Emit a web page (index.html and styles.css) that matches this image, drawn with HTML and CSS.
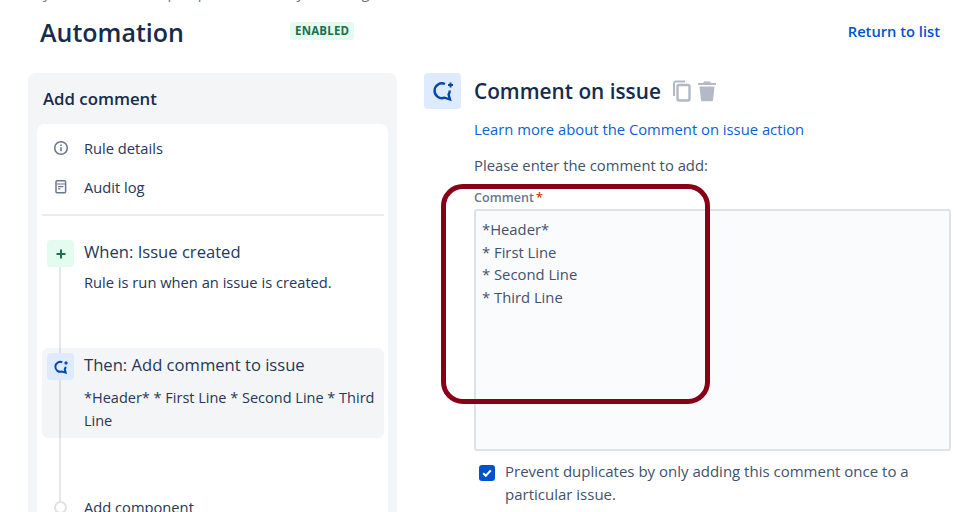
FILE: index.html
```html
<!DOCTYPE html>
<html lang="en">
<head>
    <meta charset="UTF-8">
    <title>Automation</title>
    <link rel="stylesheet" href="styles.css">
</head>
<body>
    <div class="page">
        <p class="cut-line">your rules for all open pull item to any other log</p>

        <div class="page-header">
            <h1>Automation</h1>
            <span class="lozenge">ENABLED</span>
            <a class="return-link" href="#">Return to list</a>
        </div>

        <div class="columns">
            <!-- Rule outline -->
            <div class="side-panel">
                <h2>Add comment</h2>
                <div class="side-card">
                    <div class="nav-item">
                        <svg class="nav-icon" width="16" height="16" viewBox="0 0 16 16" fill="none" stroke="#6b778c" stroke-width="1.6">
                            <circle cx="8" cy="8" r="6.3"/>
                            <path d="M8 7.2v4M8 4.4v1.6"/>
                        </svg>
                        <span>Rule details</span>
                    </div>
                    <div class="nav-item">
                        <svg class="nav-icon" width="16" height="16" viewBox="0 0 16 16" fill="none" stroke="#6b778c" stroke-width="1.5">
                            <rect x="3" y="1.7" width="9.6" height="12" rx="1"/>
                            <path d="M3.5 5h8.6M5 7.6h5.4M5 9.8h2.4" stroke-width="1.2"/>
                        </svg>
                        <span>Audit log</span>
                    </div>
                    <div class="divider"></div>

                    <div class="steps">
                        <div class="step step-trigger">
                            <div class="step-icon icon-green">
                                <svg width="12" height="12" viewBox="0 0 12 12" stroke="#216e4e" stroke-width="2"><path d="M6 1.5v9M1.5 6h9"/></svg>
                            </div>
                            <div class="step-body">
                                <div class="step-title">When: Issue created</div>
                                <div class="step-text">Rule is run when an issue is created.</div>
                            </div>
                        </div>
                        <div class="step step-action">
                            <div class="step-icon icon-blue">
                                <svg width="16" height="16" viewBox="0 0 24 24" fill="none" stroke="#0747a6" stroke-width="3">
                                    <path d="M14 5A7.400 7.400 0 1 0 13.500 18.700L19 20.400 17.600 15.500A7.400 7.400 0 0 0 18.800 11.500"/>
                                    <path d="M19.500 3.500v5M17 6h5" stroke-width="2.200"/>
                                </svg>
                            </div>
                            <div class="step-body">
                                <div class="step-title">Then: Add comment to issue</div>
                                <div class="step-text">*Header* * First Line * Second Line * Third Line</div>
                            </div>
                        </div>
                        <div class="step step-add">
                            <div class="step-dot"></div>
                            <div class="step-body">Add component</div>
                        </div>
                    </div>
                </div>
            </div>

            <!-- Component config -->
            <div class="config">
                <div class="config-head">
                    <div class="config-icon">
                        <svg width="24" height="24" viewBox="0 0 24 24" fill="none" stroke="#0747a6" stroke-width="2.400">
                            <path d="M14 5A7.400 7.400 0 1 0 13.500 18.700L19 20.400 17.600 15.500A7.400 7.400 0 0 0 18.800 11.500"/>
                            <path d="M19.500 3.500v5M17 6h5" stroke-width="2"/>
                        </svg>
                    </div>
                    <h2>Comment on issue</h2>
                    <svg class="copy-icon" width="22" height="24" viewBox="0 0 22 24" fill="none" stroke="#b3b9c4" stroke-width="2">
                        <path d="M14 2.500H5a2 2 0 0 0-2 2V17" />
                        <rect x="6.500" y="6" width="12" height="15.500" rx="1.500" stroke-width="2.400"/>
                    </svg>
                    <svg width="20" height="22" viewBox="0 0 20 22" fill="#b3bac5">
                        <path d="M7 1.500h6l.8 1.500H19v2H1V3h5.200zM2.500 6.500h15l-1.500 14a1 1 0 0 1-1 .8H5a1 1 0 0 1-1-.8z"/>
                    </svg>
                </div>

                <div class="config-body">
                    <a class="learn-link" href="#">Learn more about the Comment on issue action</a>
                    <p class="prompt">Please enter the comment to add:</p>
                    <label class="field-label">Comment<span class="required">*</span></label>
                    <div class="comment-box">*Header*<br>* First Line<br>* Second Line<br>* Third Line</div>
                    <div class="check-row">
                        <span class="checkbox">
                            <svg width="12" height="12" viewBox="0 0 12 12" fill="none" stroke="#fff" stroke-width="2"><path d="M2.200 6.300l2.600 2.500 5-5.400"/></svg>
                        </span>
                        <span>Prevent duplicates by only adding this comment once to a particular issue.</span>
                    </div>
                </div>
            </div>
        </div>

        <!-- Hand-drawn highlight on top of the screenshot -->
        <div class="highlight"></div>
    </div>
</body>
</html>
```

FILE: styles.css
```css
* {
    box-sizing: border-box;
    margin: 0;
    padding: 0;
}

html, body {
    height: 100%;
    overflow: hidden;
}

body {
    font-family: "Open Sans", "Noto Sans", sans-serif;
    font-size: 14.7px;
    line-height: 23px;
    color: #253858;
    background: #fff;
}

a {
    color: #0c5fd8;
    text-decoration: none;
}

.page {
    position: relative;
    height: 512px;
    overflow: hidden;
    padding-left: 28px;
}

/* Previous line of the page, only the descenders are still in view */
.cut-line {
    height: 21px;
    margin-top: -18px;
    padding-left: 15px;
    line-height: 20px;
    color: #6b778c;
    white-space: nowrap;
    overflow: hidden;
}

.page-header {
    display: flex;
    align-items: center;
    height: 59px;
    padding-left: 12px;
    padding-right: 17px;
}

.page-header h1 {
    width: 250px;
    font-size: 25px;
    font-weight: 600;
    color: #172b4d;
}

.lozenge {
    padding: 0 5px;
    height: 18px;
    line-height: 18px;
    font-size: 11.500px;
    font-weight: 700;
    letter-spacing: 0.2px;
    color: #216e4e;
    background: #e3fcef;
    border-radius: 3px;
    margin-top: -3px;
}

.return-link {
    margin-left: auto;
    font-size: 14.700px;
    font-weight: 600;
    color: #0052cc;
    margin-top: -3px;
}

.columns {
    display: flex;
    margin-top: 11px;
}

/* Left outline */
.side-panel {
    flex: none;
    width: 369px;
    height: 460px;
    padding: 0 9px;
    background: #f4f5f7;
    border-radius: 8px;
}

.side-panel h2 {
    padding: 14px 0 0 6px;
    height: 51px;
    font-size: 16.800px;
    font-weight: 600;
    color: #172b4d;
}

.side-card {
    height: 420px;
    padding: 5px 4px 0 5px;
    background: #fff;
    border-radius: 8px;
}

.nav-item {
    display: flex;
    align-items: center;
    height: 39px;
    gap: 15px;
    padding-left: 11px;
}

.nav-icon {
    flex: none;
    margin-top: -2px;
}

.divider {
    height: 2px;
    margin-top: 7px;
    background: #ebecf0;
}

.steps {
    position: relative;
    padding-top: 19px;
}

.steps::before {
    content: '';
    position: absolute;
    left: 17px;
    top: 50px;
    width: 2px;
    height: 240px;
    background: #e6e7ec;
}

.step {
    position: relative;
    display: flex;
    gap: 10px;
    padding: 5px;
    border-radius: 6px;
}

.step-trigger {
    height: 113px;
}

.step-action {
    height: 90px;
    background: rgba(9, 30, 66, 0.045);
}

.step-action .step-title {
    margin-bottom: 9px;
}

.step-action .step-text {
    font-size: 14.500px;
}

.step-add {
    margin-top: 53px;
    padding-left: 12px;
    gap: 17px;
    align-items: center;
}

.step-icon {
    flex: none;
    display: flex;
    align-items: center;
    justify-content: center;
    width: 27px;
    height: 27px;
    border-radius: 4px;
}

.icon-green {
    background: #e3fcef;
}

.icon-blue {
    background: #deebff;
}

.step-dot {
    flex: none;
    width: 13px;
    height: 13px;
    border: 2px solid #dfe1e6;
    border-radius: 50%;
    background: #fff;
}

.step-title {
    font-size: 16.600px;
    line-height: 24px;
    margin-bottom: 7px;
    color: #253858;
}

.step-text {
    line-height: 23px;
}

/* Right config */
.config {
    flex: 1;
    padding-left: 27px;
}

.config-head {
    display: flex;
    align-items: center;
    height: 36px;
}

.config-head h2 {
    font-size: 20.800px;
    font-weight: 600;
    line-height: 22px;
    margin: 0 10px 0 13px;
    color: #172b4d;
}

.config-icon {
    display: flex;
    align-items: center;
    justify-content: center;
    width: 37px;
    height: 36px;
    background: #deebff;
    border-radius: 4px;
}

.copy-icon {
    margin-right: 4px;
}

.config-body {
    padding: 9px 6px 0 50px;
}

.learn-link {
    display: block;
    font-size: 14.800px;
}

.prompt {
    margin-top: 13px;
    font-size: 14.800px;
    color: #42526e;
}

.field-label {
    display: block;
    margin-top: 13px;
    font-size: 12.600px;
    line-height: 16px;
    font-weight: 600;
    color: #6b778c;
}

.required {
    color: #de350b;
    margin-left: 2px;
}

.comment-box {
    height: 242px;
    margin-top: 3px;
    padding: 7px 6px;
    font-size: 14.800px;
    line-height: 22.500px;
    color: #42526e;
    background: #fafbfc;
    border: 2px solid #dfe1e6;
    border-radius: 3px;
}

.check-row {
    display: flex;
    gap: 10px;
    margin-top: 9px;
    padding-left: 5px;
    padding-right: 20px;
    font-size: 15px;
    color: #42526e;
}

.checkbox {
    flex: none;
    display: flex;
    align-items: center;
    justify-content: center;
    width: 16px;
    height: 16px;
    margin-top: 5px;
    background: #0052cc;
    border-radius: 3px;
}

.highlight {
    position: absolute;
    left: 441px;
    top: 184px;
    width: 269px;
    height: 220px;
    border: 5px solid #880015;
    border-radius: 22px;
}
```
